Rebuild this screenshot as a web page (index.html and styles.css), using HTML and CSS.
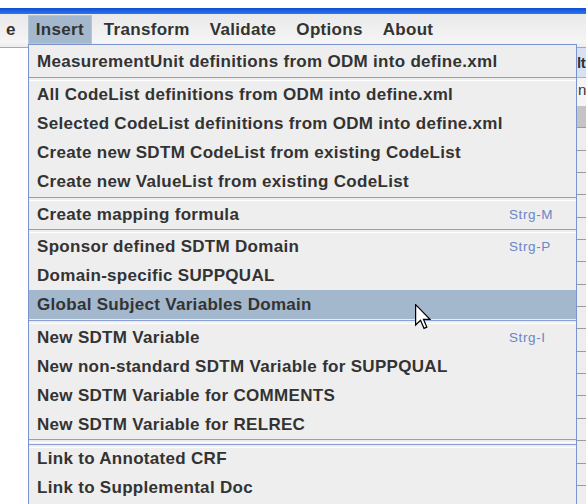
FILE: index.html
```html
<!DOCTYPE html>
<html lang="en">
<head>
<meta charset="utf-8">
<title>Insert menu</title>
<link rel="stylesheet" href="styles.css">
</head>
<body>
<div class="window">
  <div class="top-gap"></div>
  <div class="titlebar"></div>
  <nav class="menubar">
    <span class="mb-item mb-clipped">e</span>
    <span class="mb-item active">Insert</span>
    <span class="mb-item">Transform</span>
    <span class="mb-item">Validate</span>
    <span class="mb-item">Options</span>
    <span class="mb-item">About</span>
  </nav>

  <main class="content">
    <div class="table">
      <div class="th">lt</div>
      <div class="tr first">n</div>
      <div class="tr sel"></div>
      <div class="tr"></div><div class="tr"></div><div class="tr"></div>
      <div class="tr"></div><div class="tr"></div><div class="tr"></div>
      <div class="tr"></div><div class="tr"></div><div class="tr"></div>
      <div class="tr"></div><div class="tr"></div><div class="tr"></div>
      <div class="tr"></div><div class="tr"></div><div class="tr"></div>
      <div class="tr"></div><div class="tr"></div>
    </div>
  </main>

  <div class="popup">
    <div class="mi">MeasurementUnit definitions from ODM into define.xml</div>
    <div class="sep"></div>
    <div class="mi">All CodeList definitions from ODM into define.xml</div>
    <div class="mi">Selected CodeList definitions from ODM into define.xml</div>
    <div class="mi">Create new SDTM CodeList from existing CodeList</div>
    <div class="mi">Create new ValueList from existing CodeList</div>
    <div class="sep"></div>
    <div class="mi"><span class="label">Create mapping formula</span><span class="key">Strg-M</span></div>
    <div class="sep short"></div>
    <div class="mi"><span class="label">Sponsor defined SDTM Domain</span><span class="key">Strg-P</span></div>
    <div class="mi">Domain-specific SUPPQUAL</div>
    <div class="mi hover">Global Subject Variables Domain</div>
    <div class="sep"></div>
    <div class="mi"><span class="label">New SDTM Variable</span><span class="key">Strg-I</span></div>
    <div class="mi">New non-standard SDTM Variable for SUPPQUAL</div>
    <div class="mi">New SDTM Variable for COMMENTS</div>
    <div class="mi">New SDTM Variable for RELREC</div>
    <div class="sep double"></div>
    <div class="mi">Link to Annotated CRF</div>
    <div class="mi">Link to Supplemental Doc</div>
  </div>

  <svg class="cursor" width="16" height="26" viewBox="0 0 13 21">
    <path d="M0.5 0.5 L0.5 17 L4.5 13.2 L7.3 19.7 L9.6 18.7 L6.9 12.4 L12.2 12.4 Z" fill="#fff" stroke="#000" stroke-width="1" stroke-linejoin="miter"/>
  </svg>
</div>
</body>
</html>
```

FILE: styles.css
```css
* { box-sizing: border-box; }

html, body {
  margin: 0;
  padding: 0;
  width: 586px;
  height: 504px;
  overflow: hidden;
  background: #ffffff;
}

.window {
  position: relative;
  width: 586px;
  height: 504px;
  display: flex;
  flex-direction: column;
  font-family: "Liberation Sans", Arial, sans-serif;
  color: #333333;
}

.top-gap {
  height: 8px;
  background: #ffffff;
}

.titlebar {
  height: 6px;
  background: linear-gradient(to bottom, #0b4fd6, #2f74ec);
}

/* menu bar */
.menubar {
  height: 34px;
  display: flex;
  align-items: flex-start;
  gap: 4px;
  padding-top: 1px;
  background: linear-gradient(to bottom, #e9e9e9, #f5f5f5 85%, #ececec);
  border-bottom: 1px solid #a8a8a8;
}

.mb-item {
  height: 29px;
  line-height: 29px;
  padding: 0 8px;
  font-size: 17px;
  font-weight: bold;
  letter-spacing: 0.3px;
  color: #333333;
}

.mb-clipped {
  padding-left: 6px;
  padding-right: 8px;
}

.mb-item.active {
  background: #a3b8cc;
  box-shadow: inset 0 0 0 1px #b5c6d8;
}

/* table behind the popup */
.content {
  flex: 1;
  display: flex;
  justify-content: flex-end;
  background: #ffffff;
  overflow: hidden;
}

.table {
  width: 9px;
  display: flex;
  flex-direction: column;
  background: #eeeeee;
  overflow: hidden;
}

.th {
  height: 30px;
  line-height: 29px;
  font-size: 15px;
  font-weight: bold;
  letter-spacing: -0.5px;
  background: #d6e2f1;
  border-bottom: 1px solid #9fb2d6;
  white-space: nowrap;
}

.tr {
  height: 22.35px;
  flex: none;
  border-bottom: 1px solid #9c9c9c;
  font-size: 15px;
  white-space: nowrap;
}

.tr.first {
  height: 28px;
  line-height: 24px;
  padding-left: 1px;
  background: #f4f4f4;
  border-bottom: none;
}

.tr.sel {
  background: #c4c4c4;
}

/* popup menu */
.popup {
  position: absolute;
  left: 28px;
  top: 44px;
  width: 549px;
  height: 470px;
  padding-top: 2px;
  background: #eeeeee;
  border: 1px solid #7b94cf;
  border-bottom: none;
}

.mi {
  height: 29px;
  display: flex;
  align-items: center;
  padding-left: 8px;
  font-size: 17px;
  font-weight: bold;
  letter-spacing: 0.3px;
  color: #333333;
  white-space: nowrap;
}

.mi .label { flex: 1; }

.mi .key {
  width: 67px;
  font-size: 13.5px;
  font-weight: normal;
  letter-spacing: 0.6px;
  color: #6d84c6;
}

.mi.hover {
  background: #a3b8cc;
}

.sep {
  height: 4px;
  padding-top: 1px;
}

.sep.short {
  height: 3px;
  padding-top: 0;
}

.sep::before {
  content: "";
  display: block;
  height: 2px;
  border-top: 1px solid #8aa0d4;
  border-bottom: 1px solid #ffffff;
}

.sep.double {
  height: 5px;
  padding-top: 0;
}

.sep.double::after {
  content: "";
  display: block;
  height: 2px;
  margin-top: 1px;
  border-top: 1px solid #8aa0d4;
  border-bottom: 1px solid #ffffff;
}

/* mouse pointer over the menu */
.cursor {
  position: absolute;
  left: 415px;
  top: 304px;
}
```
